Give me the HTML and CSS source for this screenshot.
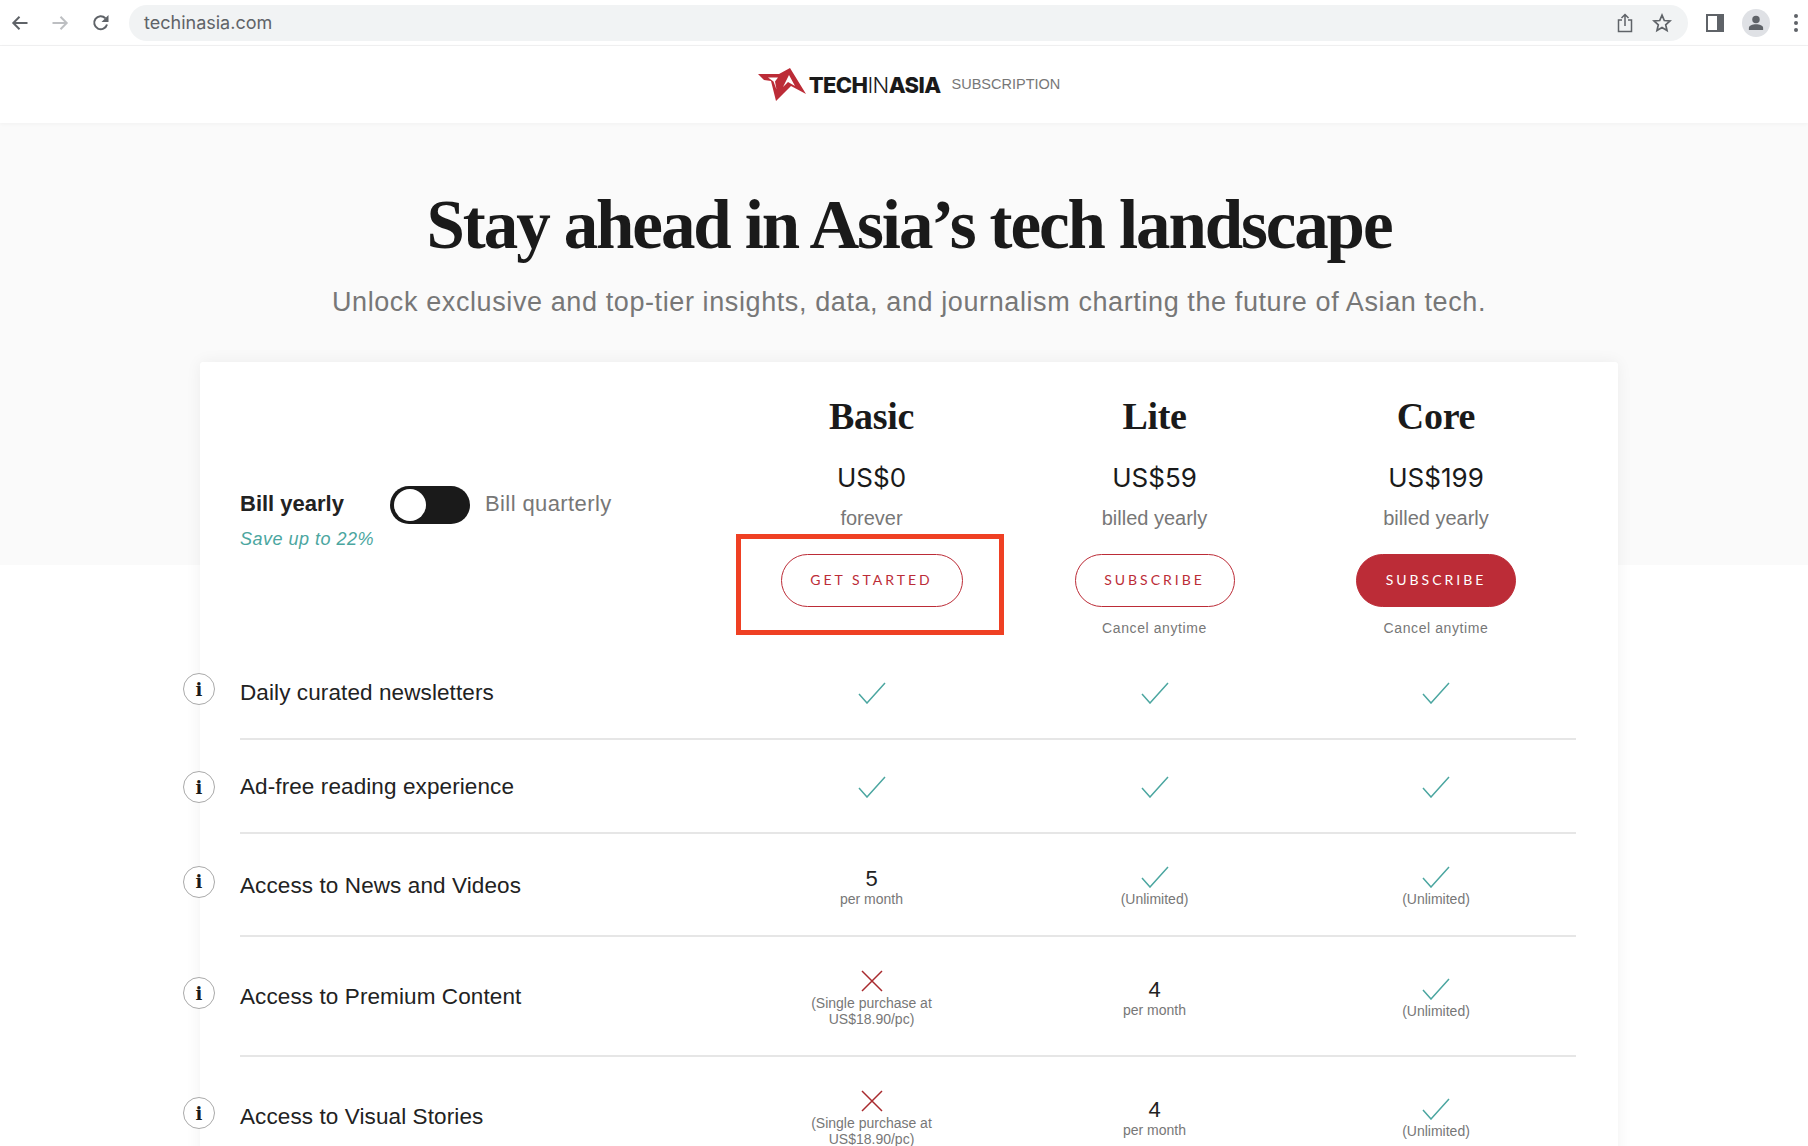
FILE: index.html
```html
<!DOCTYPE html>
<html lang="en">
<head>
    <meta charset="UTF-8">
    <title>Tech in Asia Subscription</title>
    <link rel="stylesheet" href="styles.css">
</head>
<body>
    <div class="browser-bar">
        <div class="nav-icons">
            <svg class="nav-icon" viewBox="0 0 18 18"><path d="M16.5 9H2.5M8.5 2.8L2.3 9l6.2 6.2" fill="none" stroke="#5f6368" stroke-width="2"/></svg>
            <svg class="nav-icon" viewBox="0 0 18 18"><path d="M1.5 9h14M9.500 2.800L15.700 9l-6.200 6.200" fill="none" stroke="#bdbfc2" stroke-width="2"/></svg>
            <svg class="nav-icon reload-icon" viewBox="0 0 18 18"><path d="M15 10.500A6.500 6.500 0 1 1 13.400 4.200" fill="none" stroke="#5f6368" stroke-width="2"/><path d="M16.500 1v7h-7z" fill="#5f6368"/></svg>
        </div>
        <div class="address-bar">
            <span class="url">techinasia.com</span>
            <svg class="share-icon" viewBox="0 0 16 20"><path d="M5 7H1.500v11.500h13V7H11M8 13V1.500M4.500 5L8 1.500 11.500 5" fill="none" stroke="#5f6368" stroke-width="1.500"/></svg>
            <svg class="star-icon" viewBox="0 0 20 20"><path d="M10 2.200l2.300 5.300 5.700.5-4.300 3.800 1.300 5.600-5-3-5 3 1.300-5.600L2 8l5.700-.5z" fill="none" stroke="#5f6368" stroke-width="1.700"/></svg>
        </div>
        <div class="profile-icons">
            <svg class="side-icon" viewBox="0 0 18 18"><rect width="18" height="18" fill="#5f6368"/><rect x="2" y="2" width="9" height="14" fill="#fff"/></svg>
            <div class="avatar">
                <svg class="avatar-icon" viewBox="0 0 18 18"><circle cx="9" cy="5" r="4.200" fill="#5f6368"/><path d="M1 17v-2.500C1 12 5 10.500 9 10.500s8 1.500 8 4V17z" fill="#5f6368"/></svg>
            </div>
            <div class="dots"><span></span><span></span><span></span></div>
        </div>
    </div>

    <div class="site-header">
        <svg class="logo-mark" viewBox="0 0 48 34">
            <path d="M0 6h21L32 0l16 26-15-8-15 15-5-20-7-1z" fill="#bc2c37"/>
            <path d="M10 9.500h10l-3 4 1.500 8-3-8zM31 7l6 11-7-4-5 5z" fill="#fff"/>
        </svg>
        <span class="logo-text">TECH<span class="logo-thin">IN</span>ASIA</span>
        <span class="logo-sub">SUBSCRIPTION</span>
    </div>

    <div class="page">
        <h1>Stay ahead in Asia’s tech landscape</h1>
        <p class="lead">Unlock exclusive and top-tier insights, data, and journalism charting the future of Asian tech.</p>

        <div class="card">
            <div class="plans">
                <div class="billing">
                    <div class="billing-row">
                        <span class="bill-active">Bill yearly</span>
                        <div class="toggle"><div class="knob"></div></div>
                        <span class="bill-other">Bill quarterly</span>
                    </div>
                    <div class="save">Save up to 22%</div>
                </div>
                <div class="plan">
                    <div class="plan-name">Basic</div>
                    <div class="price">US$0</div>
                    <div class="period">forever</div>
                    <a href="#" class="btn btn-wide">GET STARTED</a>
                    <div class="highlight"></div>
                </div>
                <div class="plan">
                    <div class="plan-name">Lite</div>
                    <div class="price">US$59</div>
                    <div class="period">billed yearly</div>
                    <a href="#" class="btn">SUBSCRIBE</a>
                    <div class="cancel">Cancel anytime</div>
                </div>
                <div class="plan">
                    <div class="plan-name">Core</div>
                    <div class="price">US$199</div>
                    <div class="period">billed yearly</div>
                    <a href="#" class="btn btn-solid">SUBSCRIBE</a>
                    <div class="cancel">Cancel anytime</div>
                </div>
            </div>

            <div class="row row-sm">
                <div class="info"><span>i</span></div>
                <div class="feature">Daily curated newsletters</div>
                <div class="cell"><svg class="check" viewBox="0 0 28 22"><path d="M1 12l8 9L27 1"/></svg></div>
                <div class="cell"><svg class="check" viewBox="0 0 28 22"><path d="M1 12l8 9L27 1"/></svg></div>
                <div class="cell"><svg class="check" viewBox="0 0 28 22"><path d="M1 12l8 9L27 1"/></svg></div>
            </div>
            <div class="row row-sm">
                <div class="info info-low"><span>i</span></div>
                <div class="feature">Ad-free reading experience</div>
                <div class="cell"><svg class="check" viewBox="0 0 28 22"><path d="M1 12l8 9L27 1"/></svg></div>
                <div class="cell"><svg class="check" viewBox="0 0 28 22"><path d="M1 12l8 9L27 1"/></svg></div>
                <div class="cell"><svg class="check" viewBox="0 0 28 22"><path d="M1 12l8 9L27 1"/></svg></div>
            </div>
            <div class="row row-md">
                <div class="info"><span>i</span></div>
                <div class="feature">Access to News and Videos</div>
                <div class="cell cell-stack"><div class="count">5</div><div class="note">per month</div></div>
                <div class="cell cell-stack"><svg class="check" viewBox="0 0 28 22"><path d="M1 12l8 9L27 1"/></svg><div class="note">(Unlimited)</div></div>
                <div class="cell cell-stack"><svg class="check" viewBox="0 0 28 22"><path d="M1 12l8 9L27 1"/></svg><div class="note">(Unlimited)</div></div>
            </div>
            <div class="row row-lg">
                <div class="info"><span>i</span></div>
                <div class="feature">Access to Premium Content</div>
                <div class="cell cell-stack"><svg class="cross" viewBox="0 0 22 22"><path d="M1 1l20 20M21 1L1 21"/></svg><div class="note">(Single purchase at<br>US$18.90/pc)</div></div>
                <div class="cell cell-stack"><div class="count">4</div><div class="note">per month</div></div>
                <div class="cell cell-stack"><svg class="check" viewBox="0 0 28 22"><path d="M1 12l8 9L27 1"/></svg><div class="note">(Unlimited)</div></div>
            </div>
            <div class="row row-lg">
                <div class="info"><span>i</span></div>
                <div class="feature">Access to Visual Stories</div>
                <div class="cell cell-stack"><svg class="cross" viewBox="0 0 22 22"><path d="M1 1l20 20M21 1L1 21"/></svg><div class="note">(Single purchase at<br>US$18.90/pc)</div></div>
                <div class="cell cell-stack"><div class="count">4</div><div class="note">per month</div></div>
                <div class="cell cell-stack"><svg class="check" viewBox="0 0 28 22"><path d="M1 12l8 9L27 1"/></svg><div class="note">(Unlimited)</div></div>
            </div>
        </div>
    </div>
</body>
</html>
```
FILE: styles.css
```css
body {
    margin: 0;
    height: 1146px;
    overflow: hidden;
    font-family: "Liberation Sans", Arial, sans-serif;
    color: #222;
    background-color: #fff;
}

/* browser chrome */
.browser-bar {
    height: 45px;
    display: flex;
    align-items: center;
    border-bottom: 1px solid #f1f1f2;
    background-color: #fff;
}
.nav-icons {
    display: flex;
    gap: 22px;
    width: 129px;
    padding-left: 11px;
    box-sizing: border-box;
}
.nav-icon {
    width: 18px;
    height: 18px;
}
.reload-icon {
    margin-left: 1px;
}
.address-bar {
    width: 1559px;
    height: 36px;
    display: flex;
    align-items: center;
    background-color: #f1f3f4;
    border-radius: 18px;
    box-sizing: border-box;
    padding-left: 15px;
}
.url {
    font-family: Inter, sans-serif;
    font-size: 18px;
    line-height: 38px;
    color: #5f6368;
    flex: 1;
}
.share-icon {
    width: 16px;
    height: 20px;
    margin-right: 19px;
}
.star-icon {
    width: 20px;
    height: 20px;
    margin-right: 16px;
}
.profile-icons {
    display: flex;
    align-items: center;
    flex: 1;
    padding-left: 18px;
}
.side-icon {
    width: 18px;
    height: 18px;
}
.avatar {
    width: 28px;
    height: 28px;
    margin-left: 18px;
    border-radius: 50%;
    background-color: #dfe1e5;
    display: flex;
    align-items: center;
    justify-content: center;
}
.avatar-icon {
    width: 16px;
    height: 16px;
}
.dots {
    display: flex;
    flex-direction: column;
    gap: 3px;
    margin-left: 24px;
}
.dots span {
    width: 4px;
    height: 4px;
    border-radius: 50%;
    background-color: #5f6368;
}

/* site header */
.site-header {
    height: 77px;
    padding-left: 10px;
    display: flex;
    align-items: center;
    justify-content: center;
    background-color: #fff;
    box-shadow: 0 1px 4px rgba(0, 0, 0, 0.04);
    position: relative;
}
.logo-mark {
    width: 48px;
    height: 34px;
    margin-right: 3px;
}
.logo-text {
    font-family: Inter, sans-serif;
    font-weight: 800;
    font-size: 22px;
    letter-spacing: -0.6px;
    color: #1a1a1a;
}
.logo-thin {
    font-weight: 300;
}
.logo-sub {
    font-size: 14.500px;
    color: #777;
    margin-left: 11px;
    padding-bottom: 1px;
}

/* page */
.page {
    background-image: linear-gradient(#fafafa 442px, #fff 442px);
    padding-top: 62px;
}
h1 {
    margin: 0;
    padding-left: 10px;
    font-family: "Liberation Serif", serif;
    font-weight: 700;
    font-size: 69px;
    line-height: 80px;
    letter-spacing: -2.100px;
    text-align: center;
    color: #1a1a1a;
}
.lead {
    margin: 19px 0 42px;
    padding-left: 10px;
    font-size: 27px;
    line-height: 36px;
    letter-spacing: 0.6px;
    text-align: center;
    color: #777;
}
.card {
    width: 1418px;
    margin-left: 200px;
    box-sizing: border-box;
    padding: 30px 42px 0 40px;
    background-color: #fff;
    border-radius: 3px;
    box-shadow: 0 0 16px rgba(0, 0, 0, 0.06);
}
.plans, .row {
    display: grid;
    grid-template-columns: 490px 283px 283px 280px;
}
.plans {
    height: 254px;
}
.billing {
    padding-top: 94px;
}
.billing-row {
    display: flex;
    align-items: center;
    height: 38px;
}
.bill-active {
    font-size: 22px;
    font-weight: 700;
    width: 150px;
    padding-bottom: 2px;
}
.toggle {
    width: 80px;
    height: 38px;
    box-sizing: border-box;
    padding: 3px 4px;
    border-radius: 19px;
    background-color: #1a1a1a;
}
.knob {
    width: 32px;
    height: 32px;
    border-radius: 50%;
    background-color: #fff;
}
.bill-other {
    font-size: 22px;
    letter-spacing: 0.4px;
    color: #777;
    margin-left: 15px;
    padding-bottom: 2px;
}
.save {
    margin-top: 5px;
    font-size: 18px;
    line-height: 20px;
    font-style: italic;
    letter-spacing: 0.5px;
    color: #4ba6a0;
}
.plan {
    display: flex;
    flex-direction: column;
    align-items: center;
    position: relative;
}
.plan-name {
    font-family: "Liberation Serif", serif;
    font-weight: 700;
    font-size: 38px;
    line-height: 48px;
    letter-spacing: -0.3px;
    color: #1a1a1a;
}
.price {
    margin-top: 22px;
    font-family: Inter, sans-serif;
    font-size: 26px;
    line-height: 32px;
    color: #1a1a1a;
}
.period {
    margin-top: 12px;
    font-size: 20px;
    line-height: 24px;
    color: #777;
}
.btn {
    display: block;
    margin-top: 24px;
    width: 160px;
    height: 53px;
    box-sizing: border-box;
    border: 1.500px solid #bc2c37;
    border-radius: 27px;
    font-family: Lato, sans-serif;
    font-size: 14px;
    line-height: 50px;
    letter-spacing: 3px;
    text-align: center;
    text-decoration: none;
    color: #bc2c37;
}
.btn-wide {
    width: 182px;
}
.btn-solid {
    background-color: #bc2c37;
    color: #fff;
}
.cancel {
    margin-top: 12px;
    font-size: 14px;
    line-height: 18px;
    letter-spacing: 0.6px;
    color: #777;
}
/* red annotation box drawn over the screenshot */
.highlight {
    position: absolute;
    left: 6px;
    top: 142px;
    width: 268px;
    height: 101px;
    box-sizing: border-box;
    border: 5px solid #ef4023;
}
.row {
    position: relative;
    align-items: center;
    box-sizing: border-box;
    padding-top: 2px;
    border-bottom: 2px solid #e6e6e6;
}
.row-sm {
    height: 94px;
}
.row-md {
    height: 103px;
}
.row-lg {
    height: 120px;
}
.feature {
    font-size: 22.500px;
    letter-spacing: 0.1px;
    color: #222;
}
.info {
    position: absolute;
    left: -57px;
    top: calc(50% - 19px);
    width: 32px;
    height: 32px;
    box-sizing: border-box;
    border: 1px solid #aaa;
    border-radius: 50%;
    background-color: #fff;
    display: flex;
    align-items: center;
    justify-content: center;
    font-family: "DejaVu Serif", serif;
    font-weight: 700;
    font-size: 18px;
    color: #1a1a1a;
}
.info-low {
    top: calc(50% - 15px);
}
.cell {
    display: flex;
    flex-direction: column;
    align-items: center;
    text-align: center;
}
.cell-stack {
    padding-top: 3px;
}
.check, .cross {
    fill: none;
    stroke-width: 1.500;
}
.check {
    width: 28px;
    height: 22px;
    stroke: #4ba6a0;
}
.cross {
    width: 22px;
    height: 22px;
    stroke: #a92a2e;
}
.check + .note, .cross + .note {
    margin-top: 3px;
}
.count {
    font-size: 22px;
    line-height: 24px;
    color: #222;
}
.note {
    font-size: 14px;
    line-height: 16.500px;
    color: #777;
}
```
